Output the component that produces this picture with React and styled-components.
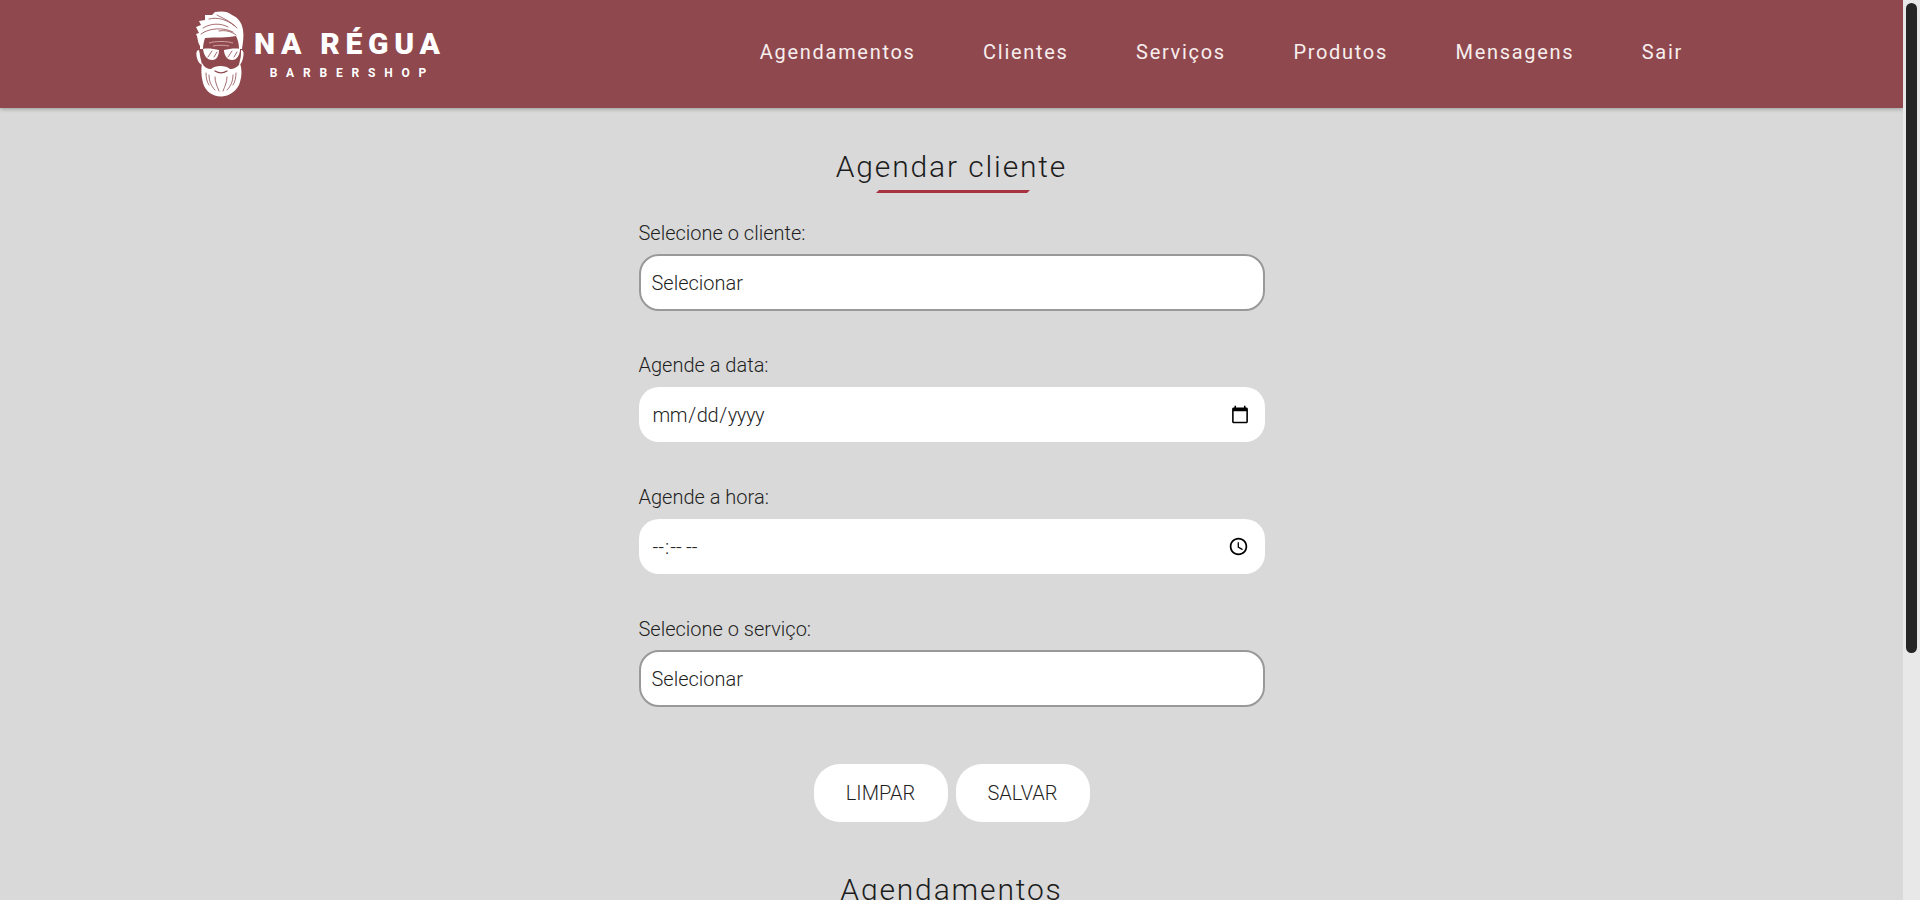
import styled, { createGlobalStyle } from "styled-components";

const GlobalStyle = createGlobalStyle`
  * { box-sizing: border-box; }
  html { scrollbar-width: none; }
  body {
    margin: 0 17px 0 0;
    background: #d9d9d9;
    color: #1f1f1f;
    font-family: Roboto, "Liberation Sans", sans-serif;
    font-weight: 300;
  }
`;

const ScrollTrack = styled.div`
  position: fixed;
  top: 0;
  right: 0;
  width: 17px;
  height: 100vh;
  padding: 3px;
  background: #e8e8e8;
`;

const ScrollThumb = styled.div`
  height: 650px;
  background: #252525;
  border-radius: 6px;
`;

const Header = styled.header`
  height: 108px;
  display: flex;
  align-items: center;
  justify-content: space-between;
  padding: 0 220px 0 195px;
  background: #8f484d;
  box-shadow: 0 1px 4px rgba(0, 0, 0, 0.3);
`;

const Logo = styled.div`
  display: flex;
  align-items: center;
  gap: 9px;
  color: #fff;
`;

const LogoText = styled.div`
  display: flex;
  flex-direction: column;
  align-items: center;
`;

const LogoName = styled.span`
  font-size: 30px;
  line-height: 34px;
  font-weight: 900;
  letter-spacing: 5.7px;
  white-space: nowrap;
`;

const LogoSub = styled.span`
  font-size: 12px;
  line-height: 15px;
  margin: 5px 0 0 5px;
  font-weight: 700;
  letter-spacing: 8.8px;
`;

const Nav = styled.nav`
  display: flex;
  gap: 67.5px;
  padding-bottom: 4px;
`;

const NavLink = styled.a`
  color: #f7eeee;
  font-size: 20px;
  font-weight: 400;
  letter-spacing: 1.7px;
`;

const Main = styled.main`
  width: 626px;
  margin: 0 auto;
  padding-top: 41px;
  min-height: 1138px;
`;

const Title = styled.h2`
  margin: 0;
  text-align: center;
  font-size: 30px;
  line-height: 35px;
  font-weight: 300;
  letter-spacing: 1.85px;
  color: #1c1c1c;

  &::after {
    content: "";
    display: ${({ $underlined }) => ($underlined ? "block" : "none")};
    width: 151px;
    height: 3px;
    margin: 6px auto 0;
    background: #a8323f;
    transform: translateX(1.5px) skewX(-45deg);
  }
`;

const Form = styled.form`
  margin-top: 28px;
`;

const Field = styled.div`
  height: 132px;
`;

const Label = styled.label`
  display: block;
  font-size: 20px;
  line-height: 24px;
  margin-bottom: 9px;
  color: #1f1f1f;
`;

const Select = styled.select`
  appearance: none;
  width: 100%;
  height: 57px;
  padding: 0 11px;
  background: #fff;
  border: 2px solid #999;
  border-radius: 20px;
  font: 300 20px Roboto, sans-serif;
  color: #1f1f1f;
`;

const DateInput = styled.input`
  display: block;
  width: 100%;
  height: 55px;
  margin-top: 10px;
  padding: 0 13px;
  background: #fff;
  border: none;
  border-radius: 20px;
  font: 300 20px Roboto, sans-serif;
  letter-spacing: ${({ $spacing }) => $spacing};
  color: #1f1f1f;
`;

const Actions = styled.div`
  display: flex;
  justify-content: center;
  gap: 8px;
  margin-top: 15px;
`;

const Button = styled.button`
  width: 134px;
  height: 58px;
  background: #fff;
  border: none;
  border-radius: 26px;
  font: 300 20px Roboto, sans-serif;
  color: #1f1f1f;
`;

const Section = styled.section`
  margin-top: 50px;
`;

const HeadLogo = () => (
  <svg width="50" height="86" viewBox="0 0 50 86" aria-hidden="true">
    <g fill="#fff">
      {/* hair */}
      <path d="M5 35C2 30 3 26 1 23L4 22L1 16L6 14L4 10L10 9L10 4L17 4L20 1C26 0 33 0 37 4C42 6 47 11 48 19C49 25 48 31 47 38L44 38C44 33 43 29 41 25C33 27 20 26 10 27C9 30 8 34 8 38L5 38C5 37 5 36 5 35Z" />
      {/* lenses */}
      <path d="M8 38C13 37 19 38 24 39C24 44 22 49 17 49C12 49 9 45 8 38Z" />
      <path d="M29 39C34 38 40 37 45 38C45 44 42 49 37 49C32 49 29 44 29 39Z" />
      {/* ears */}
      <path d="M4 39C1 39 1 43 2 47C3 51 5 53 7 54L6 49C5 46 5 43 4 39Z" />
      <path d="M46 39C49 39 49 43 48 47C47 51 46 53 44 54L45 49C46 46 46 43 46 39Z" />
      {/* beard */}
      <path d="M7 52C9 56 12 58 16 58C20 54 31 54 35 58C39 58 43 56 45 52C47 58 47 65 45 71C43 79 35 85 27 85.5C18 86 10 80 8 72C6 65 6 58 7 52Z" />
    </g>
    <g fill="none" stroke="#8f484d" strokeWidth="0.8" strokeLinecap="round">
      <path d="M8 17C16 12 26 12 33 16M6 23C14 17 28 16 38 21M22 4C27 7 34 9 42 17M14 8C22 6 31 8 40 15M24 20C30 19 36 20 41 24" />
      <path d="M13 46L17 40M19 46L22 41M33 46L37 40M39 46L42 41" />
      <path d="M20 60C24 62.5 28 62.5 32 60" strokeWidth="1.4" />
      <path d="M14 64C14 70 16 75 20 79M20 66C20 71 22 75 24 80M38 64C38 70 36 75 32 79M32 66C32 71 30 75 28 80M11 62C11 67 12 71 14 74M41 62C41 67 40 71 38 74" />
    </g>
    <path d="M14 32C20 30 32 30 38 32M18 35C22 34 30 34 34 35" fill="none" stroke="#e3b9b9" strokeWidth="0.8" />
  </svg>
);

const navItems = ["Agendamentos", "Clientes", "Serviços", "Produtos", "Mensagens", "Sair"];

export default function App() {
  return (
    <>
      <GlobalStyle />
      <Header>
        <Logo>
          <HeadLogo />
          <LogoText>
            <LogoName>NA RÉGUA</LogoName>
            <LogoSub>BARBERSHOP</LogoSub>
          </LogoText>
        </Logo>
        <Nav>
          {navItems.map((item) => (
            <NavLink key={item}>{item}</NavLink>
          ))}
        </Nav>
      </Header>
      <Main>
        <Title $underlined>Agendar cliente</Title>
        <Form>
          <Field>
            <Label>Selecione o cliente:</Label>
            <Select>
              <option>Selecionar</option>
            </Select>
          </Field>
          <Field>
            <Label>Agende a data:</Label>
            <DateInput type="date" $spacing="-0.4px" />
          </Field>
          <Field>
            <Label>Agende a hora:</Label>
            <DateInput type="time" $spacing="0.3px" />
          </Field>
          <Field>
            <Label>Selecione o serviço:</Label>
            <Select>
              <option>Selecionar</option>
            </Select>
          </Field>
          <Actions>
            <Button type="button">LIMPAR</Button>
            <Button type="button">SALVAR</Button>
          </Actions>
        </Form>
        <Section>
          <Title>Agendamentos</Title>
        </Section>
      </Main>
      <ScrollTrack>
        <ScrollThumb />
      </ScrollTrack>
    </>
  );
}
